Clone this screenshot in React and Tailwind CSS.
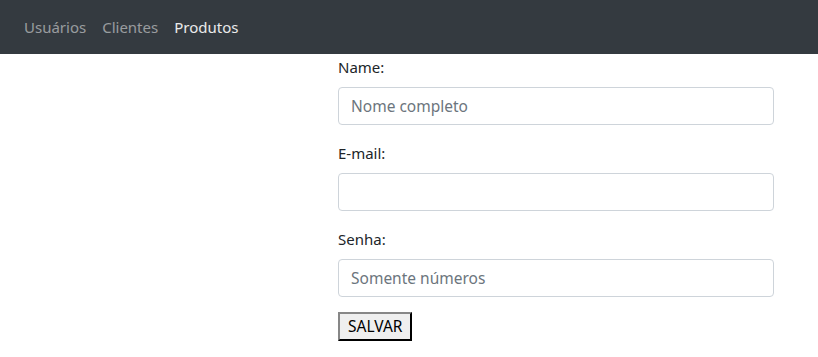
import React from "react";

function App() {
  const fields = [
    { label: "Name:", placeholder: "Nome completo", type: "text" },
    { label: "E-mail:", placeholder: "", type: "email" },
    { label: "Senha:", placeholder: "Somente números", type: "text" },
  ];

  return (
    <div className="min-h-screen bg-white text-[#212529] text-[15px]" style={{ fontFamily: '"Segoe UI", "Noto Sans", sans-serif' }}>
      {/* Navbar */}
      <nav className="flex items-center h-[54px] px-4 bg-[#343a40]">
        <ul className="flex">
          <li><a href="#" className="block px-2 py-2 text-white/50">Usuários</a></li>
          <li><a href="#" className="block px-2 py-2 text-white/50">Clientes</a></li>
          <li><a href="#" className="block px-2 py-2 text-white/90">Produtos</a></li>
        </ul>
      </nav>

      {/* Form */}
      <div className="flex">
        <div className="w-[338px] shrink-0"></div>
        <form className="w-[436px] pt-px">
          {fields.map((f, i) => (
            <div key={i} className="mb-4">
              <label className="block mb-2 leading-6">{f.label}</label>
              <input
                type={f.type}
                placeholder={f.placeholder}
                className="block w-full h-[38px] px-3 border border-[#ced4da] rounded bg-white text-[15.5px] text-[#495057] placeholder:text-[#6c757d] outline-none"
              />
            </div>
          ))}
          <button
            type="button"
            className="px-[8px] h-[29px] -mt-px bg-[#efefef] border-2 text-black text-[15.5px] leading-none"
            style={{ borderStyle: "outset", borderColor: "#333" }}
          >
            SALVAR
          </button>
        </form>
      </div>
    </div>
  );
}

export default App;
